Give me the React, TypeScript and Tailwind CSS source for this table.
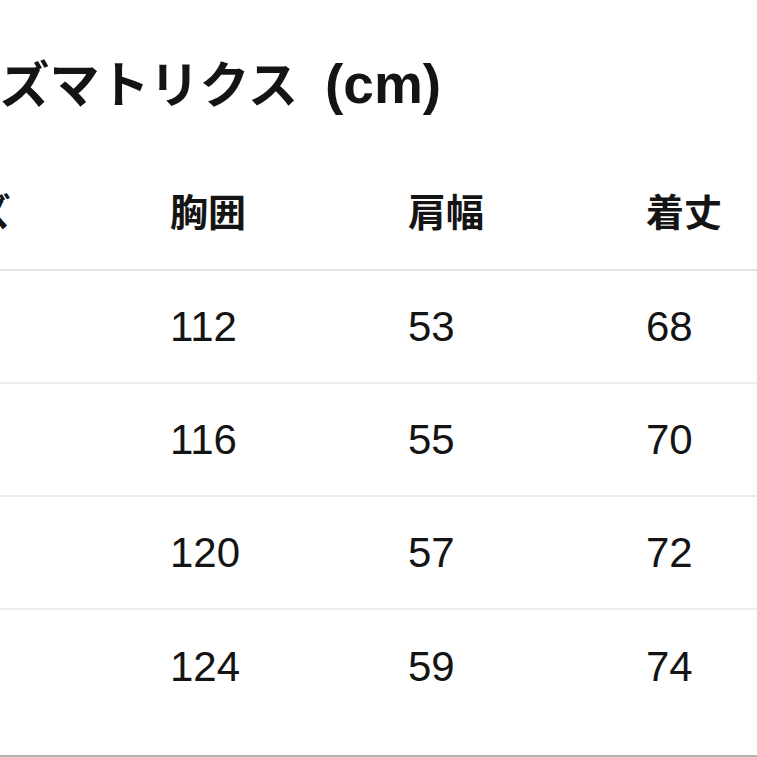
import React from "react";

const rows = [
  ["S", "112", "53", "68"],
  ["M", "116", "55", "70"],
  ["L", "120", "57", "72"],
  ["XL", "124", "59", "74"],
];

export default function App() {
  const font = { fontFamily: '"Liberation Sans", "Noto Sans CJK JP", sans-serif' };
  return (
    <div className="w-[757px] h-[757px] bg-white overflow-hidden relative text-[#141414]" style={font}>
      <div className="h-[158px] pt-[55px]">
        <div className="-ml-[99px] text-[50px] leading-[58px] font-bold whitespace-nowrap">
          サイズマトリクス<span className="ml-[27px] text-[55px]">(cm)</span>
        </div>
      </div>
      <div className="-ml-[102px]">
        <div className="flex h-[113px] items-center border-b-2 border-[#e4e4e4] font-bold text-[38px]">
          <div className="w-[272px] shrink-0">サイズ</div>
          <div className="w-[238px] shrink-0">胸囲</div>
          <div className="w-[238px] shrink-0">肩幅</div>
          <div className="w-[238px] shrink-0">着丈</div>
        </div>
        {rows.map((r, i) => (
          <div
            key={i}
            className={
              "flex h-[113px] items-center text-[42px] " +
              (i < rows.length - 1 ? "border-b-2 border-[#ececec]" : "")
            }
          >
            <div className="w-[272px] shrink-0">{r[0]}</div>
            <div className="w-[238px] shrink-0">{r[1]}</div>
            <div className="w-[238px] shrink-0">{r[2]}</div>
            <div className="w-[238px] shrink-0">{r[3]}</div>
          </div>
        ))}
      </div>
      <div className="absolute left-0 right-0 bottom-0 h-[2px] bg-[#b4b4b4]" />
    </div>
  );
}
